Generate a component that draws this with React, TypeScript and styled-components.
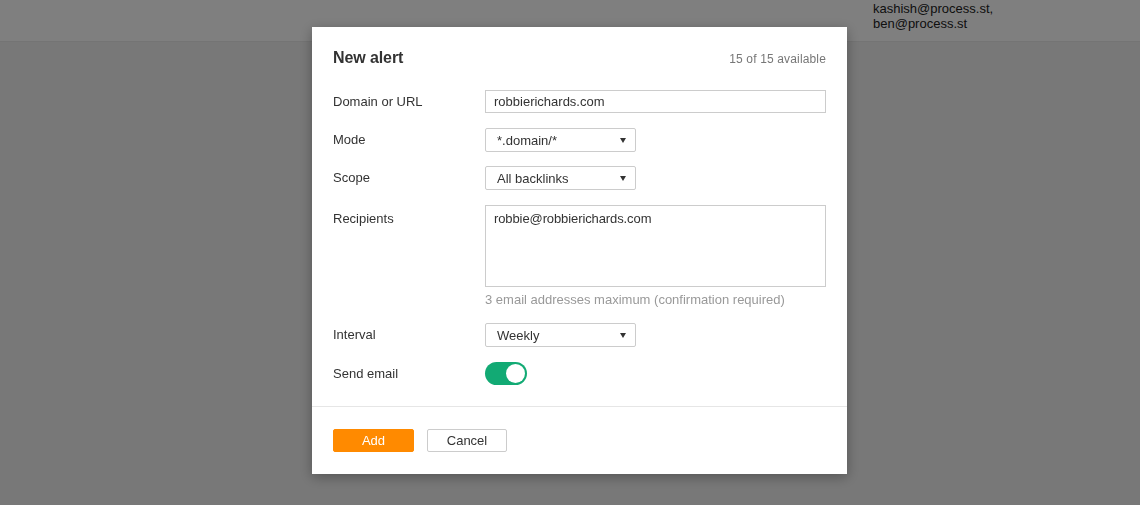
import { useState } from "react"
import styled, { createGlobalStyle } from 'styled-components'

const Global = createGlobalStyle`
  html, body {
    margin: 0;
    padding: 0;
    height: 100%;
  }
  body {
    font-family: "Liberation Sans", Arial, sans-serif;
    background: #f0f0f0;
    color: #333;
  }
`

const Page = styled.div`
  height: 505px;
  overflow: hidden;
  background: #f0f0f0;
`

const TopBar = styled.div`
  height: 42px;
  background: #fff;
  border-bottom: 1px solid #e8e8e8;
  box-sizing: border-box;
  display: flex;
  justify-content: flex-end;
  padding-right: 144px;
  .who {
    font-size: 13px;
    line-height: 15px;
    color: #222;
    width: 123px;
    padding-top: 1px;
  }
`

const Overlay = styled.div`
  position: fixed;
  inset: 0;
  background: rgba(0, 0, 0, 0.5);
  padding: 27px 0 0 312px;
`

const Modal = styled.div`
  width: 535px;
  background: #fff;
  box-shadow: 0 3px 12px rgba(0, 0, 0, 0.3);
`

const Header = styled.div`
  display: flex;
  justify-content: space-between;
  align-items: baseline;
  padding: 20px 21px 0 21px;
  h2 {
    margin: 0;
    font-size: 16px;
    line-height: 22px;
    font-weight: bold;
    letter-spacing: -0.1px;
    color: #333;
  }
  span {
    font-size: 12px;
    letter-spacing: 0.15px;
    color: #777;
  }
`

const Body = styled.div`
  padding: 21px 21px 0 21px;
  border-bottom: 1px solid #e6e6e6;
`

const Row = styled.div<{ $gap?: number; $tall?: boolean }>`
  display: grid;
  grid-template-columns: 152px 1fr;
  align-items: start;
  margin-bottom: ${p => p.$gap ?? 15}px;
  label {
    font-size: 13px;
    line-height: ${p => (p.$tall ? 27 : 23)}px;
    color: #333;
  }
`

const TextInput = styled.input`
  box-sizing: border-box;
  width: 341px;
  height: 23px;
  border: 1px solid #ccc;
  padding: 0 8px;
  font-family: inherit;
  font-size: 13px;
  color: #333;
  outline: none;
`

const SelectBox = styled.div`
  box-sizing: border-box;
  width: 151px;
  height: 24px;
  border: 1px solid #ccc;
  border-radius: 2px;
  padding: 0 8px 0 11px;
  display: flex;
  align-items: center;
  justify-content: space-between;
  font-size: 13px;
  color: #333;
  background: #fff;
  .caret {
    width: 0;
    height: 0;
    border-left: 3px solid transparent;
    border-right: 3px solid transparent;
    border-top: 5px solid #333;
    margin-right: 1px;
  }
`

const TextArea = styled.textarea`
  box-sizing: border-box;
  display: block;
  width: 341px;
  height: 82px;
  border: 1px solid #ccc;
  padding: 5px 8px;
  font-family: inherit;
  font-size: 13px;
  line-height: 16px;
  letter-spacing: -0.1px;
  color: #333;
  resize: none;
  outline: none;
`

const Hint = styled.div`
  font-size: 13px;
  line-height: 16px;
  color: #999;
  margin-top: 5px;
`

const Toggle = styled.button<{ $on: boolean }>`
  width: 42px;
  height: 23px;
  border: 0;
  border-radius: 12px;
  padding: 0;
  background: ${p => (p.$on ? '#12aa74' : '#ccc')};
  display: flex;
  align-items: center;
  justify-content: ${p => (p.$on ? 'flex-end' : 'flex-start')};
  cursor: pointer;
  span {
    width: 19px;
    height: 19px;
    border-radius: 50%;
    background: #fff;
    margin: 0 2px;
  }
`

const Footer = styled.div`
  display: flex;
  gap: 13px;
  padding: 22px 21px 22px 21px;
`

const Button = styled.button<{ $primary?: boolean }>`
  box-sizing: border-box;
  height: 23px;
  width: ${p => (p.$primary ? 81 : 80)}px;
  border-radius: 2px;
  border: 1px solid ${p => (p.$primary ? '#ff8a00' : '#ccc')};
  background: ${p => (p.$primary ? '#ff8a00' : '#fff')};
  color: ${p => (p.$primary ? '#fff' : '#333')};
  font-family: inherit;
  font-size: 13px;
  padding: 0;
`

function Select({ value }: { value: string }) {
  return (
    <SelectBox>
      <span>{value}</span>
      <span className='caret' />
    </SelectBox>
  )
}

export default function App() {
  const [domain, setDomain] = useState('robbierichards.com')
  const [recipients, setRecipients] = useState('robbie@robbierichards.com')
  const [sendEmail, setSendEmail] = useState(true)
  return (
    <Page>
      <Global />
      <TopBar>
        <div className='who'>
          kashish@process.st,<br />ben@process.st
        </div>
      </TopBar>
      <Overlay>
        <Modal>
          <Header>
            <h2>New alert</h2>
            <span>15 of 15 available</span>
          </Header>
          <Body>
            <Row>
              <label>Domain or URL</label>
              <TextInput value={domain} onChange={e => setDomain(e.target.value)} />
            </Row>
            <Row $gap={14}>
              <label>Mode</label>
              <Select value='*.domain/*' />
            </Row>
            <Row>
              <label>Scope</label>
              <Select value='All backlinks' />
            </Row>
            <Row $tall>
              <label>Recipients</label>
              <div>
                <TextArea value={recipients} onChange={e => setRecipients(e.target.value)} />
                <Hint>3 email addresses maximum (confirmation required)</Hint>
              </div>
            </Row>
            <Row>
              <label>Interval</label>
              <Select value='Weekly' />
            </Row>
            <Row $gap={21}>
              <label>Send email</label>
              <Toggle $on={sendEmail} onClick={() => setSendEmail(!sendEmail)}>
                <span />
              </Toggle>
            </Row>
          </Body>
          <Footer>
            <Button $primary>Add</Button>
            <Button>Cancel</Button>
          </Footer>
        </Modal>
      </Overlay>
    </Page>
  )
}
